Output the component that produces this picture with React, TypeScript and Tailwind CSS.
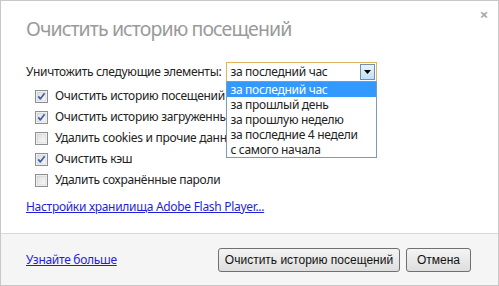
import React from 'react';

const font = { fontFamily: '"Segoe UI", "Noto Sans", "Open Sans", sans-serif' };

const Check = ({ checked }: { checked: boolean }) => (
  <svg width="13" height="13" viewBox="0 0 13 13" className="shrink-0">
    <defs>
      <linearGradient id="cbg" x1="0" y1="0" x2="1" y2="1">
        <stop offset="0" stopColor="#dcdcdc" />
        <stop offset="1" stopColor="#fbfbfb" />
      </linearGradient>
    </defs>
    <rect x="0.5" y="0.5" width="12" height="12" fill="#fff" stroke="#8e8f8f" />
    <rect x="2" y="2" width="9" height="9" fill="url(#cbg)" stroke="#c6c6c6" strokeWidth="0.6" />
    {checked && (
      <path d="M3.3 6.4 L5.3 8.9 L9.6 3.3" fill="none" stroke="#3b5fa8" strokeWidth="1.7" strokeLinejoin="round" />
    )}
  </svg>
);

const items = [
  { label: 'Очистить историю посещений', checked: true },
  { label: 'Очистить историю загруженных файлов', checked: true },
  { label: 'Удалить cookies и прочие данные сайтов и плагинов', checked: false },
  { label: 'Очистить кэш', checked: true },
  { label: 'Удалить сохранённые пароли', checked: false },
];

const options = ['за последний час', 'за прошлый день', 'за прошлую неделю', 'за последние 4 недели', 'с самого начала'];

export default function App() {
  return (
    <div className="w-[499px] h-[286px] bg-white border border-[#c8c8c8] flex flex-col relative overflow-hidden text-[12px] tracking-[-0.3px] text-[#222]" style={font}>
      <span className="absolute right-[10px] top-[6px] text-[#a8a8a8] text-[15px] font-bold leading-none">×</span>

      <div className="flex-1 px-[25px] pt-[14px]">
        <h1 className="text-[19.5px] leading-[28px] tracking-[-0.9px] text-[#9a9a9a] font-normal">Очистить историю посещений</h1>

        <div className="flex items-center mt-[19px] gap-[5px]">
          <span className="whitespace-nowrap leading-[20px]">Уничтожить следующие элементы:</span>
          <div className="relative">
            <div className="w-[151px] h-[20px] border border-[#e1b560] bg-white flex items-center pl-[3px] pr-[1px]">
              <span className="flex-1 leading-none">за последний час</span>
              <div className="w-[15px] h-[16px] border border-[#6f8fb4] bg-gradient-to-b from-[#eaf5fd] to-[#bfdff6] flex items-center justify-center">
                <svg width="7" height="4" viewBox="0 0 7 4"><path d="M0 0 H7 L3.5 4 Z" fill="#000" /></svg>
              </div>
            </div>
            <div className="absolute left-0 top-[19px] w-[151px] border border-[#7d9ab9] bg-white z-10">
              {options.map((o, i) => (
                <div key={o} className={`h-[15px] leading-[15px] pl-[3px] whitespace-nowrap ${i === 0 ? 'bg-[#3399ff] text-white' : ''}`}>{o}</div>
              ))}
            </div>
          </div>
        </div>

        <div className="flex flex-col gap-[7px] mt-[7px] pl-[9px]">
          {items.map(it => (
            <div key={it.label} className="flex items-center gap-[7px] h-[14px] whitespace-nowrap">
              <Check checked={it.checked} />
              <span>{it.label}</span>
            </div>
          ))}
        </div>

        <a className="block mt-[11px] text-[#1f1fd8] underline">Настройки хранилища Adobe Flash Player...</a>
      </div>

      <div className="h-[52px] border-t border-[#dadada] bg-[#f5f5f5] flex items-center px-[25px]">
        <a className="text-[#1f1fd8] underline">Узнайте больше</a>
        <div className="ml-auto flex gap-[6px] mr-[2px] tracking-normal" style={{ fontFamily: '"Liberation Sans", Arial, sans-serif' }}>
          <button className="h-[24px] w-[182px] border border-[#707070] rounded-[3px] bg-gradient-to-b from-[#f4f4f4] to-[#dedede] text-[12px] text-[#111]">Очистить историю посещений</button>
          <button className="h-[24px] w-[65px] border border-[#707070] rounded-[3px] bg-gradient-to-b from-[#f4f4f4] to-[#dedede] text-[12px] text-[#111]">Отмена</button>
        </div>
      </div>
    </div>
  );
}
